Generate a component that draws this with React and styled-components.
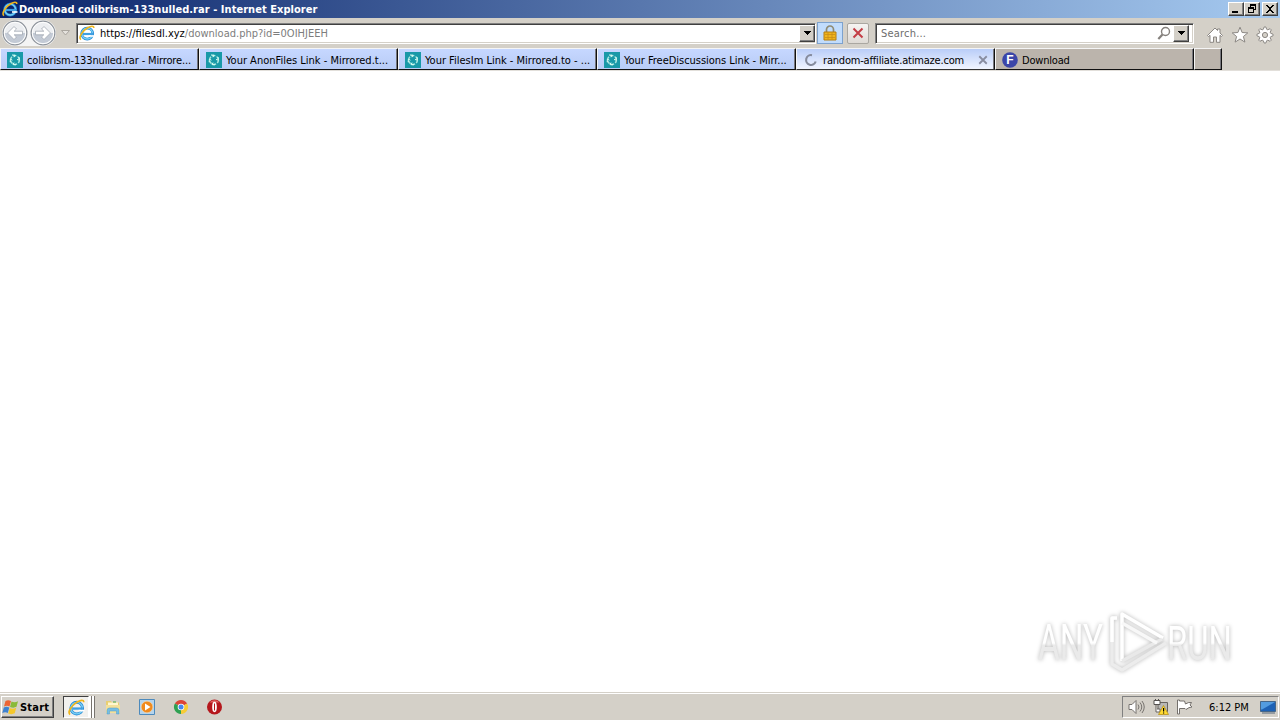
import React from "react";
import styled, { createGlobalStyle, css } from "styled-components";

const GlobalStyle = createGlobalStyle`
  * {
    box-sizing: border-box;
  }
  body {
    margin: 0;
    overflow: hidden;
    background: #fff;
    font-family: "DejaVu Sans Condensed", "DejaVu Sans", sans-serif;
    font-size: 11px;
    color: #000;
  }
  svg {
    display: block;
    flex: none;
  }
`;

const Screen = styled.div`
  width: 1280px;
  height: 720px;
  display: flex;
  flex-direction: column;
`;

const Label = styled.span`
  white-space: pre;
  line-height: 14px;
  padding-top: ${({ $drop }) => $drop ?? 0}px;
  font-weight: ${({ $bold }) => ($bold ? "bold" : "normal")};
  letter-spacing: ${({ $spacing }) => $spacing ?? 0}px;
  color: ${({ $color }) => $color ?? "#000"};
`;

const raised = css`
  border: 1px solid;
  border-color: #fff #404040 #404040 #fff;
  box-shadow: inset -1px -1px 0 #808080;
  background: #d4d0c8;
`;

const TitleBar = styled.header`
  height: 18px;
  flex: none;
  display: flex;
  align-items: center;
  padding: 0 2px;
  background: linear-gradient(90deg, #0a246a, #a6caf0);
`;

const TitleText = styled(Label)`
  flex: 1;
  padding: 1px 0 0 1px;
`;

const CaptionButton = styled.button`
  ${raised}
  width: 16px;
  height: 14px;
  padding: 0;
  margin-left: ${({ $gap }) => $gap ?? 0}px;
`;

const NavBar = styled.nav`
  height: 30px;
  flex: none;
  display: flex;
  align-items: center;
  padding-left: 2px;
  background: #d4d0c8;
`;

const Field = styled.div`
  width: ${({ $width }) => $width}px;
  height: 21px;
  margin-left: ${({ $gap }) => $gap}px;
  display: flex;
  align-items: center;
  padding-left: 2px;
  background: #fff;
  border: 1px solid;
  border-color: #808080 #fff #fff #808080;
  box-shadow: inset 1px 1px 0 #404040, inset -1px -1px 0 #d4d0c8;
`;

const FieldText = styled.div`
  flex: 1;
  padding: 2px 0 0 ${({ $pad }) => $pad}px;
  display: flex;
`;

const DropButton = styled.button`
  ${raised}
  width: 16px;
  height: 17px;
  padding: 0;
  display: grid;
  place-items: center;
  margin-left: ${({ $left }) => $left ?? 0}px;
  margin-right: ${({ $right }) => $right ?? 0}px;
`;

const LockButton = styled.button`
  width: 26px;
  height: 22px;
  margin-left: 1px;
  padding: 0;
  display: grid;
  place-items: center;
  border: 1px solid #7da2ce;
  background: #c1dcfc;
`;

const StopButton = styled.button`
  width: 22px;
  height: 21px;
  margin-left: 4px;
  padding: 0;
  display: grid;
  place-items: center;
  border: 1px solid #aaa7a1;
  border-radius: 2px;
  background: linear-gradient(#f6f4f2, #dedad5);
`;

const Tools = styled.div`
  display: flex;
  gap: 7px;
  margin-left: 12px;
  padding-top: 4px;
`;

const TabStrip = styled.div`
  height: 23px;
  flex: none;
  display: flex;
  align-items: flex-start;
  background: #d4d0c8;
  border-bottom: 1px solid #e2dfda;
`;

const tabColors = {
  group: "linear-gradient(#c6d7ff, #b8ccf6)",
  active: "linear-gradient(#b9cdf8, #f1f5ff)",
  plain: "#bbb4ac",
};

const Tab = styled.div`
  width: ${({ $width }) => $width ?? 199}px;
  height: 22px;
  display: flex;
  align-items: center;
  padding: 2px 0 0 6px;
  background: ${({ $kind }) => tabColors[$kind]};
  border: 1px solid;
  border-color: #f5f5f5 #111 ${({ $kind }) => ($kind === "active" ? "#333" : "#111")} #f5f5f5;
  box-shadow: inset -1px 0 0 #77777d;
`;

const TabLabel = styled(Label)`
  flex: 1;
  padding: 1px 0 0 4px;
`;

const TabClose = styled.span`
  width: 20px;
  display: flex;
  padding-left: 4px;
`;

const Page = styled.main`
  flex: 1;
  display: flex;
  align-items: flex-end;
  justify-content: flex-end;
  padding: 0 42px 18px 0;
  background: #fff;
`;

const Taskbar = styled.footer`
  height: 28px;
  flex: none;
  display: flex;
  align-items: center;
  padding: 1px 1px 0;
  background: #d4d0c8;
  border-top: 1px solid #d4d0c8;
  box-shadow: inset 0 1px 0 #fff;
`;

const StartButton = styled.button`
  ${raised}
  width: 53px;
  height: 22px;
  padding: 0;
  display: flex;
  align-items: center;
  gap: 1px;
  font-family: inherit;
  font-size: 11px;
`;

const RunningApp = styled.div`
  width: 26px;
  height: 22px;
  margin-left: 9px;
  display: grid;
  place-items: center;
  background: #f2f1ee;
  border: 1px solid;
  border-color: #404040 #fff #fff #404040;
`;

const StackEdge = styled.div`
  width: 3px;
  height: 22px;
  border-right: 1px solid #77736e;
  background: #fff;
`;

const Pinned = styled.div`
  display: flex;
  gap: 18px;
  margin-left: 10px;
  flex: 1;
`;

const Tray = styled.div`
  width: 157px;
  height: 22px;
  display: flex;
  align-items: center;
  padding-left: 5px;
  border: 1px solid;
  border-color: #808080 #fff #fff #808080;
`;

const TrayIcons = styled.div`
  display: flex;
  gap: 8px;
  width: 81px;
`;

const Clock = styled(Label)`
  width: 50px;
`;

const IELogo = ({ size = 16 }) => (
  <svg width={size} height={size} viewBox="0 0 16 16" fill="none">
    <circle cx="8.2" cy="8.6" r="5.5" stroke="#2689d6" strokeWidth="2.8" />
    <circle cx="8.2" cy="8.6" r="5.4" stroke="#77d0f5" strokeWidth="1.3" />
    <path d="M4 9h10" stroke="#3f9fe2" strokeWidth="2.2" />
    <path d="M10 10.2h5.5v1.6h-5.5z" fill="#fff" />
    <path d="M2 14.6C-.8 12.7 3.2 6 8.6 2.8 12 .8 14.8.5 14.8 3" stroke="#efb51c" strokeWidth="1.6" />
  </svg>
);

const Arrow = ({ flip }) => (
  <svg width="26" height="26" viewBox="0 0 26 26">
    <circle cx="13" cy="13" r="11.8" fill="#eceef1" stroke="#8d939b" strokeWidth="1.3" />
    <path d="M2.5 13a10.5 10.5 0 0 0 21 0z" fill="#c3cad5" />
    <circle cx="13" cy="13" r="10.7" fill="none" stroke="#fff" strokeWidth="1" />
    <path
      d="M5.5 13l6.5-6.5 2.5 2.5-2.3 2.2h8.3v3.600h-8.300L14.500 17 12 19.500z"
      fill="#fff"
      stroke="#a1a8b1"
      strokeWidth=".8"
      transform={flip ? "translate(26 0) scale(-1 1)" : undefined}
    />
  </svg>
);

const NavCluster = styled.div`
  display: flex;
  gap: 2px;
  border-radius: 13px;
  background: #f4f4f4;
`;

const HistoryArrow = styled.svg`
  margin-left: 5px;
`;

const DownTriangle = () => (
  <svg width="7" height="4" shapeRendering="crispEdges">
    <path d="M0 0h7v1H0zM1 1h5v1H1zM2 2h3v1H2zM3 3h1v1H3z" />
  </svg>
);

const Recycle = () => (
  <svg width="16" height="16" viewBox="0 0 16 16" fill="none">
    <path fill="#1999a8" d="M0 0h16v16H0z" />
    <circle cx="8" cy="8" r="4.4" stroke="#a8e5df" strokeWidth="1.5" strokeDasharray="3.2 1.4" />
    <path d="M5 3l3 .2-1 2M12 5l.4 3-2.4-.5M9 12.8l-3-.2 1-2M3.2 10.2l.2-3 2 1" stroke="#dbfff3" />
  </svg>
);

const Spinner = () => (
  <svg width="16" height="16" viewBox="0 0 16 16" fill="none">
    <path d="M9 3.2A4.9 4.9 0 1 0 12.7 9.5" stroke="#858b9c" strokeWidth="2.1" />
  </svg>
);

const FBadge = () => (
  <svg width="16" height="16" viewBox="0 0 16 16">
    <circle cx="8" cy="8" r="7.8" fill="#3b46a8" />
    <text x="4.3" y="12.2" fontSize="12" fontWeight="bold" fill="#fff" fontFamily="Liberation Sans, sans-serif">
      F
    </text>
  </svg>
);

const Lock = () => (
  <svg width="14" height="16" viewBox="0 0 14 16" fill="none">
    <path d="M3.500 8V4.500a3.500 3.500 0 0 1 7 0V8" stroke="#8f8a72" strokeWidth="1.7" />
    <path d="M1 7h12v8H1z" fill="#f0b51d" stroke="#b47d12" />
    <path d="M2 9.500h10M2 12.500h10M5 7.500v7M9 7.500v7" stroke="#c98e18" strokeWidth=".8" />
  </svg>
);

const Magnifier = () => (
  <svg width="15" height="15" viewBox="0 0 15 15" fill="none" stroke="#85817d">
    <circle cx="8.5" cy="5.5" r="4" strokeWidth="1.4" />
    <path d="M5.5 8.5L1.3 13" strokeWidth="2.2" />
  </svg>
);

const toolStroke = { fill: "#fff", stroke: "#8b8783", strokeWidth: 1 };

const HomeIcon = () => (
  <svg width="18" height="18" viewBox="0 0 18 18" {...toolStroke}>
    <path d="M1.500 9.500L9 2l2.500 2.500V3h2.500v4l2.500 2.500-1 1-1.500-1.200v7h-3.500V11h-3v5.300H4v-7l-1.500 1.200z" />
  </svg>
);

const StarIcon = () => (
  <svg width="18" height="18" viewBox="0 0 18 18" {...toolStroke}>
    <path d="M9 1.200l2.100 5.300 5.700.4-4.400 3.600 1.500 5.600L9 13l-4.900 3.100 1.500-5.600L1.200 6.900l5.700-.4z" />
  </svg>
);

const GearIcon = () => {
  const teeth = Array.from({ length: 32 }, (_, i) => {
    const r = i % 4 < 2 ? 8.1 : 5.9;
    const a = ((i - 0.5) * Math.PI) / 16;
    return `${9 + r * Math.sin(a)},${9 - r * Math.cos(a)}`;
  }).join(" ");
  return (
    <svg width="18" height="18" viewBox="0 0 18 18" {...toolStroke}>
      <polygon points={teeth} />
      <circle cx="9" cy="9" r="2.6" fill="#d4d0c8" />
    </svg>
  );
};

const Cross = ({ size, color, width }) => (
  <svg width={size} height={size} viewBox="0 0 12 12" stroke={color} strokeWidth={width}>
    <path d="M1.500 1.500l9 9M10.500 1.500l-9 9" />
  </svg>
);

const CaptionGlyph = ({ d }) => (
  <svg width="14" height="12" viewBox="0 0 14 12" shapeRendering="crispEdges">
    <path d={d} fillRule="evenodd" />
  </svg>
);

const WindowsFlag = () => (
  <svg width="17" height="17" viewBox="0 0 17 17">
    <path d="M3.500 2q2.500-1.500 5.500 0l-1.500 5.500q-2.500-1.300-5.500 0z" fill="#ed6433" />
    <path d="M9.500 2.500q3 1.500 6.500-.2l-1.500 5.500q-3 1.600-6.500.1z" fill="#8aba3a" />
    <path d="M1.800 8.500q2.500-1.500 5.500 0l-1.500 5.500q-2.500-1.300-5.500 0z" fill="#3e82d0" />
    <path d="M7.700 9q3 1.500 6.500-.2l-1.500 5.500q-3 1.600-6.500.1z" fill="#f5c82c" />
  </svg>
);

const FolderIcon = () => (
  <svg width="16" height="16" viewBox="0 0 16 16">
    <path d="M1 2h5l1 1.500h7V14H1z" fill="#e9cf72" />
    <path d="M3 3.500h10v5H3z" fill="#fff7cf" />
    <path d="M8 2.500h3v1H8z" fill="#4ba849" />
    <path d="M1 6h14v8H1z" fill="#f3e09a" />
    <path d="M2 15v-3.500Q2 9 4.500 9h7Q14 9 14 11.500V15h-2.500v-3h-7v3z" fill="#76bde4" stroke="#4f9fc9" strokeWidth=".5" />
  </svg>
);

const PlayerIcon = () => (
  <svg width="16" height="16" viewBox="0 0 16 16">
    <path d="M.5.500h15v15H.5z" fill="#b5d4ec" stroke="#4d8abc" />
    <circle cx="8" cy="8" r="5.8" fill="#f08a1d" stroke="#fbd39d" strokeWidth=".6" />
    <path d="M6 4.500v7L11.500 8z" fill="#fff" />
  </svg>
);

const ChromeIcon = () => (
  <svg width="16" height="16" viewBox="0 0 16 16">
    <path d="M8 8L1.900 4.500A7 7 0 0 1 14.100 4.500z" fill="#dc4437" />
    <path d="M8 8l6.100-3.500A7 7 0 0 1 8 15z" fill="#f7cc36" />
    <path d="M8 8v7A7 7 0 0 1 1.900 4.500z" fill="#2fa052" />
    <circle cx="8" cy="8" r="3.3" fill="#fff" />
    <circle cx="8" cy="8" r="2.5" fill="#4687ef" />
  </svg>
);

const OperaIcon = () => (
  <svg width="16" height="16" viewBox="0 0 16 16">
    <circle cx="7.5" cy="8" r="7.5" fill="#b5171c" />
    <path d="M2.500 3.500a6.800 6.800 0 0 1 10 0z" fill="#df6664" />
    <ellipse cx="7.5" cy="8" rx="2.3" ry="5.2" fill="#fff" />
    <path d="M7 4.500h1v7H7z" fill="#b5171c" />
  </svg>
);

const SpeakerIcon = () => (
  <svg width="17" height="16" viewBox="0 0 17 16" fill="none" stroke="#77736f">
    <path d="M1 5.500h3L8 1.500v13l-4-4H1z" fill="#fff" />
    <path d="M10 5.500q2 2.500 0 5M12 3.500q3.500 4.500 0 9M14 2q4.500 6 0 12" />
  </svg>
);

const NetworkIcon = () => (
  <svg width="16" height="16" viewBox="0 0 16 16">
    <path d="M5 3.500h9.500v9H5z" fill="#b9b8b5" stroke="#66635f" />
    <path d="M4 10h3v3H3V6" fill="#fff" stroke="#66635f" />
    <path d="M1 1.500h6v4H1zM2.500 0v2M5.500 0v2" fill="#fff" stroke="#55524f" />
    <path d="M10.500 6.500l5 9h-10z" fill="#ffda31" stroke="#b18a0b" strokeWidth=".7" />
    <path d="M10 9h1.200v3.500H10zM10 13.500h1.200v1H10z" />
  </svg>
);

const FlagIcon = () => (
  <svg width="16" height="16" viewBox="0 0 16 16" fill="#fff" stroke="#74706c">
    <path d="M.5 1v14h2V9.500H8l1 1q3-2.500 6-2.500l-2-2 1.500-2.500Q11 3 8.500 5l-1-3h-5V1z" />
  </svg>
);

const DesktopIcon = () => (
  <svg width="18" height="16" viewBox="0 0 18 16">
    <path d="M1.500 2.500h15v10h-15z" fill="#1e62b5" stroke="#466789" />
    <path d="M2 3h14L3 10.500H2z" fill="#539ce0" />
    <path d="M3 14h13" stroke="#55677a" />
  </svg>
);

const WatermarkArt = styled.svg`
  filter: drop-shadow(0 0 2px #b5b5b5);
`;

const Watermark = () => (
  <WatermarkArt width="208" height="64" viewBox="-4 0 208 64">
    <defs>
      <linearGradient id="metal" x1="0" y1="0" x2="0" y2="1">
        <stop offset="50%" stopColor="#fff" />
        <stop offset="54%" stopColor="#eaeaea" />
      </linearGradient>
    </defs>
    <g fill="url(#metal)" fontFamily="Roboto, sans-serif" fontSize="49">
      <text transform="translate(4 50) scale(.68 1)">ANY</text>
      <text transform="translate(133 50) scale(.67 1)">RUN</text>
    </g>
    <g fill="none" strokeLinejoin="round" stroke="#fff" strokeWidth="3.5">
      <path d="M83 8h-5v46l10 6 44-27" stroke="#ececec" />
      <path d="M83 8h-5v24" />
      <path d="M88 51V4l41 24" />
      <path d="M88 51l40-22" stroke="#e9e9e9" />
      <path d="M88 13l35 20" stroke="#f8f8f8" />
    </g>
  </WatermarkArt>
);

const tabs = [
  { text: "colibrism-133nulled.rar - Mirrore...", icon: <Recycle />, kind: "group", spacing: -0.15 },
  { text: "Your AnonFiles Link - Mirrored.t...", icon: <Recycle />, kind: "group" },
  { text: "Your FilesIm Link - Mirrored.to - ...", icon: <Recycle />, kind: "group" },
  { text: "Your FreeDiscussions Link - Mirr...", icon: <Recycle />, kind: "group", spacing: -0.03 },
  { text: "random-affiliate.atimaze.com", icon: <Spinner />, kind: "active", spacing: -0.19 },
  { text: "Download", icon: <FBadge />, kind: "plain", spacing: -0.2 },
];

export default function App() {
  return (
    <Screen>
      <GlobalStyle />
      <TitleBar>
        <IELogo />
        <TitleText $bold $color="#fff" $spacing={0.045}>
          Download colibrism-133nulled.rar - Internet Explorer
        </TitleText>
        <CaptionButton>
          <CaptionGlyph d="M3 8h6v2H3z" />
        </CaptionButton>
        <CaptionButton>
          <CaptionGlyph d="M5 1h6v6H9V6h1V3H6v1H5zM3 4h6v6H3zM4 6v3h4V6z" />
        </CaptionButton>
        <CaptionButton $gap={2}>
          <CaptionGlyph d="M3 2h2v1h1v1h2V3h1V2h2v1h-1v1H9v1H8v2h1v1h1v1h1v1H9V9H8V8H6v1H5v1H3V9h1V8h1V7h1V5H5V4H4V3H3z" />
        </CaptionButton>
      </TitleBar>

      <NavBar>
        <NavCluster>
          <Arrow />
          <Arrow flip />
        </NavCluster>
        <HistoryArrow width="9" height="6" viewBox="0 0 9 6">
          <path d="M.5.500h8l-4 4.500z" fill="#e5e2dd" stroke="#aaa69f" />
        </HistoryArrow>
        <Field $width={740} $gap={6}>
          <IELogo />
          <FieldText $pad={5}>
            <Label>https://filesdl.xyz</Label>
            <Label $color="#7d7d7d">/download.php?id=0OIHJEEH</Label>
          </FieldText>
          <DropButton>
            <DownTriangle />
          </DropButton>
        </Field>
        <LockButton>
          <Lock />
        </LockButton>
        <StopButton>
          <Cross size={12} color="#c33e46" width={2} />
        </StopButton>
        <Field $width={319} $gap={6}>
          <FieldText $pad={3}>
            <Label $color="#6d6d6d" $spacing={0.2}>
              Search...
            </Label>
          </FieldText>
          <Magnifier />
          <DropButton $left={1} $right={4}>
            <DownTriangle />
          </DropButton>
        </Field>
        <Tools>
          <HomeIcon />
          <StarIcon />
          <GearIcon />
        </Tools>
      </NavBar>

      <TabStrip>
        {tabs.map(({ text, icon, kind, spacing }) => (
          <Tab key={text} $kind={kind}>
            {icon}
            <TabLabel $spacing={spacing}>{text}</TabLabel>
            {kind === "active" && (
              <TabClose>
                <Cross size={10} color="#888da0" width={2.2} />
              </TabClose>
            )}
          </Tab>
        ))}
        <Tab $kind="plain" $width={28} />
      </TabStrip>

      <Page>
        <Watermark />
      </Page>

      <Taskbar>
        <StartButton>
          <WindowsFlag />
          <Label $bold $spacing={0.2} $drop={1}>
            Start
          </Label>
        </StartButton>
        <RunningApp>
          <IELogo size={17} />
        </RunningApp>
        <StackEdge />
        <StackEdge />
        <Pinned>
          <FolderIcon />
          <PlayerIcon />
          <ChromeIcon />
          <OperaIcon />
        </Pinned>
        <Tray>
          <TrayIcons>
            <SpeakerIcon />
            <NetworkIcon />
            <FlagIcon />
          </TrayIcons>
          <Clock $drop={1}>6:12 PM</Clock>
          <DesktopIcon />
        </Tray>
      </Taskbar>
    </Screen>
  );
}
